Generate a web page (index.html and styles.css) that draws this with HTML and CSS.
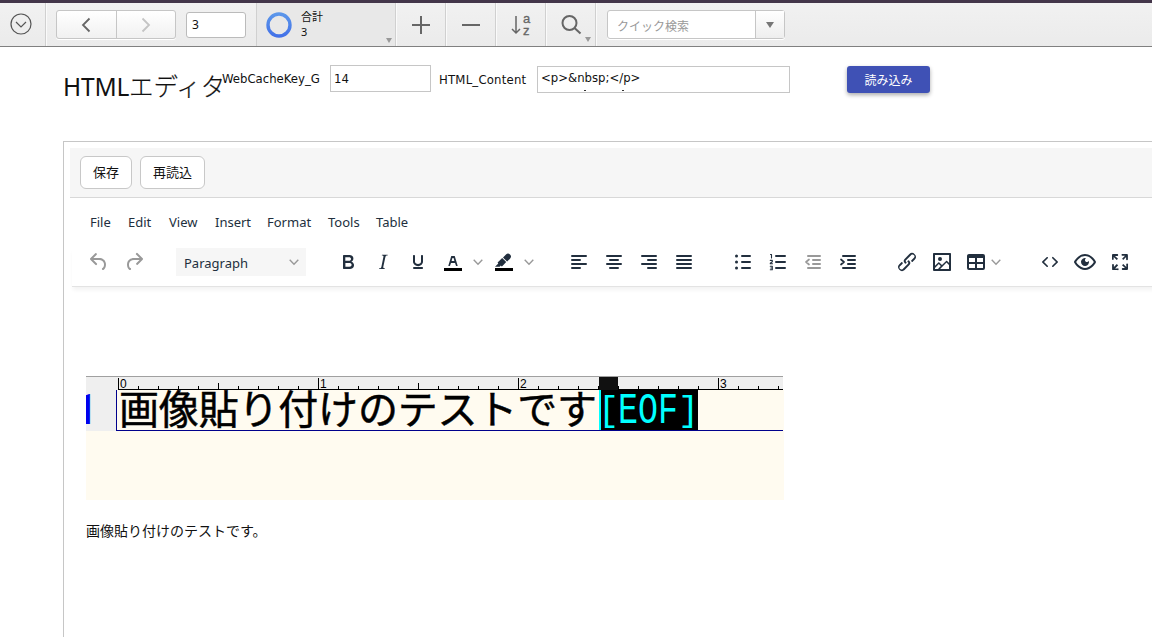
FILE: index.html
```html
<!DOCTYPE html>
<html lang="ja">
<head>
<meta charset="utf-8">
<title>HTMLエディタ</title>
<link rel="stylesheet" href="styles.css">
</head>
<body>
<header class="topbar">
  <div class="cell menu-cell"><svg width="22" height="22" viewBox="0 0 22 22" fill="none" stroke="#555" stroke-width="1.2"><circle cx="11" cy="11" r="10"/><path d="M6 9l5 5 5-5"/></svg></div>
  <div class="cell nav-cell">
    <div class="pager">
      <span class="prev"><svg width="10" height="16" viewBox="0 0 10 16" fill="none" stroke="#666" stroke-width="1.8"><path d="M8.5 1.5L2 8l6.5 6.5"/></svg></span>
      <span class="next"><svg width="10" height="16" viewBox="0 0 10 16" fill="none" stroke="#c4c4c4" stroke-width="1.8"><path d="M1.5 1.5L8 8l-6.5 6.5"/></svg></span>
    </div>
    <div class="record">3</div>
  </div>
  <div class="cell total-cell">
    <svg width="26" height="26" viewBox="0 0 26 26"><defs><linearGradient id="ring" x2="0" y2="1"><stop stop-color="#5b96ea"/><stop offset="1" stop-color="#4372e8"/></linearGradient></defs><circle cx="13" cy="13" r="11" fill="none" stroke="url(#ring)" stroke-width="3.4"/></svg>
    <div class="total"><span>合計</span><span>3</span></div>
    <i class="corner"></i>
  </div>
  <div class="cell tool"><svg width="20" height="20" viewBox="0 0 20 20" stroke="#666" stroke-width="2"><path d="M10 1v18M1 10h18"/></svg></div>
  <div class="cell tool"><svg width="20" height="20" viewBox="0 0 20 20" stroke="#666" stroke-width="2"><path d="M1 10h18"/></svg></div>
  <div class="cell tool sort"><svg width="10" height="20" viewBox="0 0 10 20" fill="none" stroke="#666" stroke-width="1.5"><path d="M5 1v17M1 14l4 4 4-4"/></svg><div class="az"><span>a</span><span>z</span></div></div>
  <div class="cell tool"><svg width="22" height="22" viewBox="0 0 22 22" fill="none" stroke="#666" stroke-width="2"><circle cx="9.5" cy="9" r="7"/><path d="M14.5 14l6 5.5"/></svg><i class="corner"></i></div>
  <div class="search"><span class="placeholder">クイック検索</span><span class="drop"><i></i></span></div>
</header>

<section class="form">
  <h1><span class="latin">HTML</span>エディタ</h1>
  <label class="key-label">WebCacheKey_G</label>
  <div class="field key">14</div>
  <label class="content-label">HTML_Content</label>
  <div class="field content"><span>&lt;p&gt;&amp;nbsp;&lt;/p&gt;</span><svg width="100" height="2"><path d="M43 .5h2M81 .5h2" stroke="#333"/></svg></div>
  <button class="load">読み込み</button>
</section>

<main class="panel">
  <div class="actions"><button>保存</button><button>再読込</button></div>
  <nav class="menus"><span class="m1">File</span><span class="m2">Edit</span><span class="m3">View</span><span class="m4">Insert</span><span class="m5">Format</span><span class="m6">Tools</span><span class="m7">Table</span></nav>
  <div class="tools">
    <div class="group history muted">
      <span class="btn"><svg class="ico" viewBox="0 0 24 24"><path d="M6.4 8H12c3.7 0 6.2 2 6.8 5.1.6 2.7-.4 5.6-2.3 6.8a1 1 0 0 1-1-1.8c1.1-.6 1.8-2.7 1.4-4.6-.5-2.1-2.1-3.5-4.9-3.5H6.4l3.3 3.3a1 1 0 1 1-1.4 1.4l-5-5a1 1 0 0 1 0-1.4l5-5a1 1 0 0 1 1.4 1.4L6.4 8Z"/></svg></span>
      <span class="btn"><svg class="ico" viewBox="0 0 24 24"><path d="M17.6 10H12c-2.8 0-4.4 1.4-4.9 3.5-.4 2 .3 4 1.4 4.6a1 1 0 1 1-1 1.8c-2-1.2-2.9-4.1-2.3-6.8.6-3 3-5.1 6.8-5.1h5.6l-3.3-3.3a1 1 0 1 1 1.4-1.4l5 5a1 1 0 0 1 0 1.4l-5 5a1 1 0 0 1-1.4-1.4l3.3-3.3Z"/></svg></span>
    </div>
    <div class="select"><span>Paragraph</span><svg class="chev" viewBox="0 0 10 10"><path d="M.7 2.8L5 7.2l4.3-4.4"/></svg></div>
    <div class="group">
      <span class="btn"><svg class="ico" viewBox="0 0 24 24"><path fill-rule="evenodd" d="M7.8 19c-.3 0-.5 0-.6-.2l-.2-.5V5.7c0-.2 0-.4.2-.5l.6-.2h5c1.5 0 2.7.3 3.5 1 .7.6 1.1 1.4 1.1 2.5a3 3 0 0 1-.6 1.9c-.4.6-1 1-1.6 1.2.4.1.9.3 1.3.6s.8.7 1 1.2c.4.4.5 1 .5 1.6 0 1.3-.4 2.3-1.3 3-.8.7-2.1 1-3.8 1H7.8Zm5-8.3c.6 0 1.2-.1 1.6-.5.4-.3.6-.7.6-1.3 0-1.1-.8-1.7-2.3-1.7H9.3v3.5h3.4Zm.5 6c.7 0 1.3-.1 1.7-.4.4-.4.6-.9.6-1.5s-.2-1-.7-1.4c-.4-.3-1-.4-2-.4H9.4v3.8h4Z"/></svg></span>
      <span class="btn"><svg class="ico" viewBox="0 0 24 24"><path d="M16.7 4.7l-.1.9h-.3c-.6 0-1 0-1.4.3-.3.3-.4.6-.5 1.1l-2.1 9.8v.6c0 .5.4.8 1.4.8h.2l-.2.8H8l.2-.8h.2c1.1 0 1.8-.5 2-1.5l2-9.8.1-.5c0-.6-.4-.8-1.4-.8h-.3l.2-.9h5.8Z"/></svg></span>
      <span class="btn"><svg class="ico" viewBox="0 0 24 24"><path d="M16 5c.6 0 1 .4 1 1v5.5a4 4 0 0 1-.4 1.8l-1 1.4a5.3 5.3 0 0 1-5.5 1 5 5 0 0 1-1.6-1c-.5-.4-.8-.9-1.1-1.4a4 4 0 0 1-.4-1.8V6c0-.6.4-1 1-1s1 .4 1 1v5.5c0 .3 0 .6.2 1l.6.7a3.3 3.3 0 0 0 2.2.8 3.4 3.4 0 0 0 2.2-.8c.3-.2.4-.5.6-.8l.2-.9V6c0-.6.4-1 1-1ZM8 17h8c.6 0 1 .4 1 1s-.4 1-1 1H8a1 1 0 0 1 0-2Z"/></svg></span>
      <span class="btn split"><svg class="ico" viewBox="0 0 24 24"><path fill="#000" d="M3 18h18v3H3z"/><path fill-rule="evenodd" d="M8.7 16h-.8a.5.5 0 0 1-.5-.6l2.7-9c.1-.3.3-.4.5-.4h2.8c.2 0 .4.1.5.4l2.7 9a.5.5 0 0 1-.5.6h-.8a.5.5 0 0 1-.4-.4l-.7-2.2c0-.3-.3-.4-.5-.4h-3.4c-.2 0-.4.1-.5.4l-.7 2.2c0 .3-.2.4-.4.4Zm2.6-7.6-.6 2a.5.5 0 0 0 .5.6h1.6a.5.5 0 0 0 .5-.6l-.6-2c0-.3-.3-.4-.5-.4h-.4c-.2 0-.4.1-.5.4Z"/></svg><svg class="chev" viewBox="0 0 10 10"><path d="M.7 2.8L5 7.2l4.3-4.4"/></svg></span>
      <span class="btn split"><svg class="ico" viewBox="0 0 24 24"><path fill="#000" d="M3 18h18v3H3z"/><path d="M7.7 16.7H3l3.3-3.3-.7-.8L10.2 8l4 4.1-4 4.2c-.2.2-.6.2-.8 0l-.6-.7-1.1 1.1zM12.7 9.2L11 7.4l3-2.9a3 3 0 0 1 4 0 3 3 0 0 1 0 4.2l-2.9 2.9-1.8-1.8z"/></svg><svg class="chev" viewBox="0 0 10 10"><path d="M.7 2.8L5 7.2l4.3-4.4"/></svg></span>
    </div>
    <div class="group">
      <span class="btn"><svg class="ico line" viewBox="0 0 24 24"><path d="M5 6h14M5 10h8M5 14h14M5 18h8"/></svg></span>
      <span class="btn"><svg class="ico line" viewBox="0 0 24 24"><path d="M5 6h14M8 10h8M5 14h14M8 18h8"/></svg></span>
      <span class="btn"><svg class="ico line" viewBox="0 0 24 24"><path d="M5 6h14M11 10h8M5 14h14M11 18h8"/></svg></span>
      <span class="btn"><svg class="ico line" viewBox="0 0 24 24"><path d="M5 6h14M5 10h14M5 14h14M5 18h14"/></svg></span>
    </div>
    <div class="group">
      <span class="btn"><svg class="ico line" viewBox="0 0 24 24"><path d="M11 6h8M11 12h8M11 18h8"/><path stroke-width="3" d="M5.5 6h.01M5.5 12h.01M5.5 18h.01"/></svg></span>
      <span class="btn"><svg class="ico line" viewBox="0 0 24 24"><path d="M10 6h9M10 12h9M10 18h9"/><path stroke-width="1.1" d="M4.5 4.5h1V8M4.3 10.4h2v1.4l-2 1.4v.5h2.2M4.3 16.3h2v3.4h-2M4.8 18h1.5"/></svg></span>
      <span class="btn muted"><svg class="ico line" viewBox="0 0 24 24"><path d="M7 6h12M12 10h7M12 14h7M7 18h12"/><path stroke-width="1.7" d="M8 9.5L5 12l3 2.5"/></svg></span>
      <span class="btn"><svg class="ico line" viewBox="0 0 24 24"><path d="M7 6h12M12 10h7M12 14h7M7 18h12"/><path stroke-width="1.7" d="M5 9.5L8 12l-3 2.5"/></svg></span>
    </div>
    <div class="group">
      <span class="btn"><svg class="ico" viewBox="0 0 24 24"><path d="M6.2 12.3a1 1 0 0 1 1.4 1.4l-2 2a2 2 0 1 0 2.6 2.8l4.8-4.8a1 1 0 0 0 0-1.4 1 1 0 1 1 1.4-1.3 2.9 2.9 0 0 1 0 4L9.6 20a3.9 3.9 0 0 1-5.5-5.5l2-2Zm11.6-.6a1 1 0 0 1-1.4-1.4l2-2a2 2 0 1 0-2.6-2.8L11 10.3a1 1 0 0 0 0 1.4A1 1 0 1 1 9.6 13a2.9 2.9 0 0 1 0-4L14.4 4a3.9 3.9 0 0 1 5.5 5.5l-2 2Z"/></svg></span>
      <span class="btn"><svg class="ico" viewBox="0 0 24 24"><path fill-rule="evenodd" d="M5 15.7l3.3-3.2c.3-.3.7-.3 1 0L12 15l4.1-4c.3-.4.8-.4 1 0l2 1.9V5H5v10.7ZM5 18V19h3l2.8-2.9-2-2L5 17.9Zm14-3-2.5-2.4-6.4 6.5H19v-4ZM4 3h16c.6 0 1 .4 1 1v16c0 .6-.4 1-1 1H4a1 1 0 0 1-1-1V4c0-.6.4-1 1-1Zm6 8a2 2 0 1 0 0-4 2 2 0 0 0 0 4Z"/></svg></span>
      <span class="btn table"><svg class="ico" viewBox="0 0 24 24"><path fill-rule="evenodd" d="M19 4a2 2 0 0 1 2 2v12a2 2 0 0 1-2 2H5a2 2 0 0 1-2-2V6c0-1.1.9-2 2-2h14ZM5 14v4h6v-4H5Zm14 0h-6v4h6v-4Zm0-6h-6v4h6V8ZM5 12h6V8H5v4Z"/></svg><svg class="chev" viewBox="0 0 10 10"><path d="M.7 2.8L5 7.2l4.3-4.4"/></svg></span>
    </div>
    <div class="group">
      <span class="btn"><svg class="ico" viewBox="0 0 24 24"><path d="M9.8 15.7c.3.3.3.8 0 1-.3.4-.9.4-1.2 0l-4.4-4.1a.8.8 0 0 1 0-1.2l4.4-4.2c.3-.3.9-.3 1.2 0 .3.3.3.8 0 1.1L6 12l3.8 3.7ZM14.2 15.7c-.3.3-.3.8 0 1 .4.4.9.4 1.2 0l4.4-4.1c.3-.3.3-.9 0-1.2l-4.4-4.2a.8.8 0 0 0-1.2 0c-.3.3-.3.8 0 1.1L18 12l-3.8 3.7Z"/></svg></span>
      <span class="btn"><svg class="ico" viewBox="0 0 24 24"><path fill-rule="evenodd" d="M3.5 12.5c.5.8 1.1 1.6 1.8 2.3 2 2 4.2 3.2 6.7 3.2s4.7-1.2 6.7-3.2a16.2 16.2 0 0 0 2.1-2.8 15.7 15.7 0 0 0-2.1-2.8c-2-2-4.2-3.2-6.7-3.2a9.3 9.3 0 0 0-6.7 3.2A16.2 16.2 0 0 0 3.2 12c0 .2.2.3.3.5Zm-2.4-1 .7-1.2L4 7.8C6.2 5.4 8.9 4 12 4c3 0 5.8 1.4 8.1 3.8a18.2 18.2 0 0 1 2.8 3.7v1l-.7 1.2-2.1 2.5c-2.3 2.4-5 3.8-8.1 3.8-3 0-5.8-1.4-8.1-3.8a18.2 18.2 0 0 1-2.8-3.7 1 1 0 0 1 0-1Zm12-3.3a2 2 0 1 0 2.7 2.6 4 4 0 1 1-2.6-2.6Z"/></svg></span>
      <span class="btn"><svg class="ico" viewBox="0 0 24 24"><path d="M15.3 10l-1.2-1.3 2.9-3h-2.3a.9.9 0 1 1 0-1.7H19c.5 0 .9.4.9.9v4.4a.9.9 0 1 1-1.8 0V7l-2.9 3Zm0 4 3 3v-2.3a.9.9 0 1 1 1.7 0V19c0 .5-.4.9-.9.9h-4.4a.9.9 0 1 1 0-1.8H17l-3-2.9 1.3-1.2ZM10 15.4l-2.9 3h2.3a.9.9 0 1 1 0 1.7H5a.9.9 0 0 1-.9-.9v-4.4a.9.9 0 1 1 1.8 0V17l2.9-3 1.2 1.3ZM8.7 10 5.7 7v2.3a.9.9 0 0 1-1.7 0V5c0-.5.4-.9.9-.9h4.4a.9.9 0 0 1 0 1.8H7l3 2.9-1.3 1.2Z"/></svg></span>
    </div>
  </div>
  <article class="document">
    <svg class="capture" width="698" height="124" viewBox="0 0 698 124">
      <defs>
        <pattern id="ticks" x="32" y="0" width="20" height="14" patternUnits="userSpaceOnUse"><path d="M0 10h1v4H0z"/></pattern>
      </defs>
      <path fill="#fffbf0" d="M0 14h698v110H0z"/>
      <path fill="#efefef" d="M0 0h697v14H0zM0 14h30v41H0z"/>
      <path fill="#a0a0a0" d="M0 0h697v1H0z"/>
      <path fill="url(#ticks)" d="M32 1h665v13H32z"/>
      <path d="M32 13h665v1H32zM32 2h1v11h-1zM232 2h1v11h-1zM432 2h1v11h-1zM632 2h1v11h-1zM132 7h1v6h-1zM332 7h1v6h-1z"/>
      <g class="ruler"><text x="34" y="12">0</text><text x="234" y="12">1</text><text x="434" y="12">2</text><text x="634" y="12">3</text></g>
      <path fill="#111" d="M513 1h19v13h-19z"/>
      <path fill="#00008c" d="M30 14h1v41h-1zM30 54h667v1H30z"/>
      <path d="M514 14h98v40h-98z"/><path fill="#00ffff" d="M513 14h2v40h-2z"/>
      <text class="lineno" x="-13" y="48">1</text>
      <text class="sample" x="33" y="48" textLength="478">画像貼り付けのテストです</text>
      <g class="eof"><text class="bracket" x="512" y="45">[</text><text x="532" y="47" textLength="60" lengthAdjust="spacingAndGlyphs">EOF</text><text class="bracket" x="592" y="45">]</text></g>
    </svg>
    <p>画像貼り付けのテストです。</p>
  </article>
</main>
</body>
</html>
```
FILE: styles.css
```css
* { box-sizing: border-box; }
body { margin: 0; width: 1152px; height: 637px; overflow: hidden; background: #fff; color: #111; font-family: "Noto Sans", "Noto Sans CJK JP", sans-serif; font-size: 12px; }
svg { display: block; flex: none; }
button { font: inherit; padding: 0; }

.topbar { display: flex; height: 47px; border-top: 3px solid #43364a; border-bottom: 1px solid #808080; background: linear-gradient(#f1f1f1, #ebebeb); }
.cell { position: relative; display: flex; align-items: center; height: 43px; border-right: 1px solid #d0d0d0; box-shadow: 1px 0 #fafafa; }
.menu-cell { width: 46px; padding: 0 0 1px 10px; }
.nav-cell { width: 211px; padding-left: 10px; gap: 10px; }
.pager { display: flex; width: 120px; height: 29px; border: 1px solid #c6c6c6; border-radius: 3px; background: linear-gradient(#fff, #f1f1f1); box-shadow: 0 1px #fff; }
.pager span { flex: 1; display: flex; align-items: center; justify-content: center; }
.prev { border-right: 1px solid #c6c6c6; }
.record { width: 60px; height: 26px; border: 1px solid #bbb; border-radius: 3px; background: #fff; padding-left: 5px; line-height: 24px; font-size: 12px; }
.total-cell { width: 139px; padding-left: 9px; gap: 9px; background: #e8e8e8; }
.total { display: flex; flex-direction: column; font-size: 11px; line-height: 15px; padding-bottom: 1px; }
.corner { position: absolute; right: 4px; bottom: 4px; border: 3px solid transparent; border-top: 5px solid #999; border-bottom: 0; }
.total-cell .corner { right: 3px; bottom: 3px; }
.tool { width: 50px; justify-content: center; }
.sort { gap: 2px; }
.az { display: flex; flex-direction: column; color: #666; font-family: "Liberation Sans", sans-serif; font-size: 13px; line-height: 12px; -webkit-text-stroke: 0.3px #666; }
.search { display: flex; width: 178px; height: 29px; margin: 7px 0 0 11px; border: 1px solid #c6c6c6; border-radius: 3px; background: #fff; box-shadow: 0 1px #fff; }
.placeholder { flex: 1; padding-left: 9px; line-height: 31px; color: #999; }
.drop { display: flex; align-items: center; justify-content: center; width: 29px; border-left: 1px solid #c6c6c6; background: linear-gradient(#fff, #eee); }
.drop i { border: 4px solid transparent; border-top: 6px solid #777; border-bottom: 0; }

.form { display: flex; align-items: flex-start; height: 94px; padding: 18px 0 0 63px; font-family: "DejaVu Sans Condensed", "Noto Sans CJK JP", sans-serif; font-size: 13px; }
h1 { width: 159px; margin: 4px 0 0; font: 300 24.5px/34px "Noto Sans CJK JP", sans-serif; -webkit-text-stroke: 0.2px #111; white-space: nowrap; }
.latin { font-family: "Noto Sans", sans-serif; font-weight: 400; letter-spacing: -0.2px; -webkit-text-stroke: 0; }
.key-label { width: 108px; line-height: 28px; }
.field { height: 27px; border: 1px solid #c6c6c6; padding-left: 3px; line-height: 25px; }
.key { width: 101px; }
.content-label { width: 106px; padding-left: 8px; line-height: 30px; letter-spacing: 0.2px; }
.content { width: 253px; margin-top: 1px; line-height: 22px; }
.content span { display: block; height: 23px; }
.load { width: 83px; height: 27px; margin: 1px 0 0 57px; border: 0; border-radius: 3px; background: #3f51b5; color: #fff; font-size: 12px; box-shadow: 0 2px 4px #0005; }

.panel { width: 1100px; height: 500px; margin-left: 63px; padding: 6px; border: 1px solid #c6c6c6; }
.actions { display: flex; gap: 8px; height: 50px; padding: 8px 10px; background: #f6f6f6; border-bottom: 1px solid #d8d8d8; }
.actions button { height: 33px; padding: 0 12px 2px; border: 1px solid #c8c8c8; border-radius: 6px; background: #fff; color: #111; font-size: 13px; }
.menus { display: flex; height: 49px; padding-left: 20px; font-size: 13px; line-height: 49px; color: #222f3e; }
.m1 { width: 38px; } .m2 { width: 41px; } .m3 { width: 46px; } .m4 { width: 52px; } .m5 { width: 61px; } .m6 { width: 48px; }
.tools { display: flex; align-items: center; gap: 25px; height: 40px; margin-left: 2px; padding: 0 0 10px 10px; border-bottom: 1px solid #e3e3e3; box-shadow: 0 4px 4px -1px #0000000d; }
.group { display: flex; gap: 1px; }
.btn { display: flex; align-items: center; width: 34px; height: 28px; padding-left: 5px; fill: #222f3e; stroke: none; color: #222f3e; }
.history { width: 69px; }
.muted, .muted .btn { color: #999; fill: #999; }
.ico { width: 24px; height: 24px; }
.line { fill: none; stroke: currentColor; stroke-width: 2; stroke-linecap: round; stroke-linejoin: round; }
.split { width: 50px; gap: 8px; }
.table { width: 48px; padding-left: 4px; gap: 3px; }
.chev { width: 10px; height: 10px; fill: none; stroke: #999; stroke-width: 1.4; }
.select { display: flex; align-items: center; justify-content: space-between; width: 130px; height: 28px; padding: 0 7px 0 8px; background: #f6f6f6; font-size: 13px; color: #222f3e; }
.select span { padding-top: 2px; }
.document { padding: 89px 0 0 16px; }
.document p { margin: 19px 0; font: 14px/22px "Noto Sans CJK JP", sans-serif; }
.ruler { font: 12px "Liberation Sans", sans-serif; }
.lineno { font: bold 43px Roboto, sans-serif; fill: #0000ee; }
.sample { font: 40px "Noto Sans CJK JP", sans-serif; stroke: #000; stroke-width: 0.5px; }
.eof { font: 45px "Liberation Mono", monospace; fill: #00ffff; }
.bracket { font-size: 35px; }
```
